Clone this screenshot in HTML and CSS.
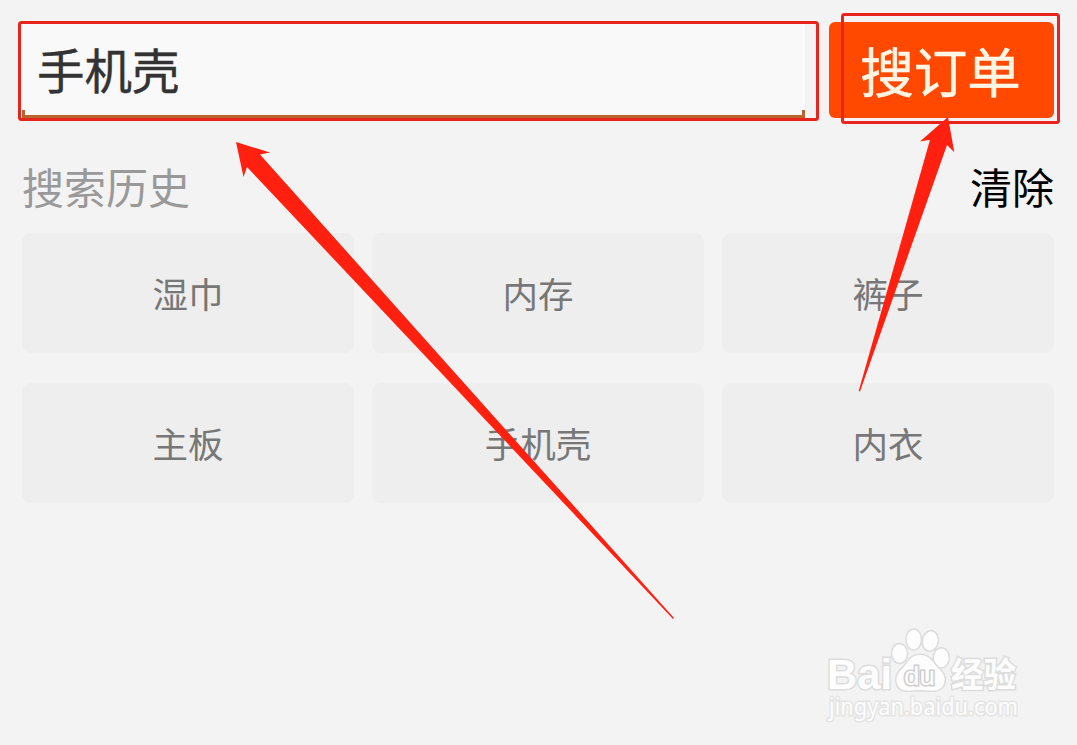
FILE: index.html
```html
<!DOCTYPE html>
<html lang="zh-CN">
<head>
  <meta charset="utf-8" />
  <title>搜索订单</title>
  <link rel="stylesheet" href="styles.css">
</head>
<body>

<div class="search">
  <div class="field">手机壳</div>
  <div class="button">搜订单</div>
</div>

<div class="heading">
  <span class="title">搜索历史</span>
  <span class="clear">清除</span>
</div>

<div class="history">
  <div class="item">湿巾</div>
  <div class="item">内存</div>
  <div class="item">裤子</div>
  <div class="item">主板</div>
  <div class="item">手机壳</div>
  <div class="item">内衣</div>
</div>

<!-- red marks and watermark drawn over the page -->
<svg class="overlay" width="1077" height="745" viewBox="0 0 1077 745">
  <g class="frame">
    <rect x="19.5" y="22.5" width="798" height="97" rx="2" />
    <rect x="842.5" y="14.5" width="216" height="108" rx="2" />
  </g>
  <g class="arrow">
    <path d="M236 142 L270 152.5 L260 154.5 L674 618 L673 619 L247 167 L243.5 177 Z" />
    <path d="M948 117 L954.3 152.3 L947 145 L860 391.5 L858.7 391 L930 139.8 L920 141.5 Z" />
  </g>
  <g class="watermark">
    <text class="bai" x="827" y="689" textLength="65" lengthAdjust="spacingAndGlyphs">Bai</text>
    <ellipse cx="899.5" cy="653.5" rx="7.3" ry="9.3" />
    <ellipse cx="913.7" cy="639.5" rx="7" ry="9.8" />
    <ellipse cx="930.3" cy="641" rx="7.3" ry="9.6" transform="rotate(10 930.3 641)" />
    <ellipse cx="941.3" cy="657.8" rx="7.3" ry="9.3" />
    <path d="M920 655 C930 655 933 663 938 668 C945 674 946 680 943 686 C938 693 928 690 920 690 C912 690 902 693 898 686 C895 680 896 674 903 668 C908 663 910 655 920 655 Z" />
    <text class="du" x="904" y="685" textLength="31" lengthAdjust="spacingAndGlyphs">du</text>
    <text class="jingyan" x="951" y="687" textLength="65" lengthAdjust="spacingAndGlyphs">经验</text>
    <text class="url" x="829" y="715" textLength="189" lengthAdjust="spacingAndGlyphs">jingyan.baidu.com</text>
  </g>
</svg>

</body>
</html>
```

FILE: styles.css
```css
body {
  position: relative;
  box-sizing: border-box;
  height: 745px;
  margin: 0;
  padding: 22px 23px 0 22px;
  overflow: hidden;
  background: #f3f3f3;
  font-family: "Noto Sans CJK SC", sans-serif;
}

.search {
  display: flex;
  justify-content: space-between;
  height: 96px;
}

.field {
  position: relative;
  box-sizing: border-box;
  width: 783px;
  padding-left: 15px;
  border-bottom: solid 3px #b9632f;
  background: #f9f9f9;
  color: #333;
  font-size: 47.5px;
  line-height: 93px;
  -webkit-text-stroke: 0.4px #333;
}

/* turned-up ends of the underline */
.field::before,
.field::after {
  content: "";
  position: absolute;
  bottom: 0;
  left: 0;
  width: 3px;
  height: 5px;
  background: #b9632f;
}
.field::after {
  right: 0;
  left: auto;
}

.button {
  box-sizing: border-box;
  width: 225px;
  padding-right: 2px;
  border-radius: 6px;
  background: #ff4800;
  color: #fff6e6;
  font-size: 53.5px;
  line-height: 95px;
  text-align: center;
  -webkit-text-stroke: 0.6px #fff6e6;
}

.heading {
  display: flex;
  justify-content: space-between;
  height: 115px;
  font-size: 42px;
  line-height: 135px;
}

.title {
  color: #999;
}

.clear {
  color: #000;
}

.history {
  display: grid;
  grid-template-columns: repeat(3, 1fr);
  gap: 30px 18px;
}

.item {
  height: 120px;
  border-radius: 9px;
  background: #eee;
  color: #777;
  font-size: 35.5px;
  line-height: 119px;
  text-align: center;
}

.overlay {
  position: absolute;
  top: 0;
  left: 0;
}

.frame {
  fill: none;
  stroke: #e8251c;
  stroke-width: 3px;
}

.arrow {
  fill: #ff2010;
}

.watermark {
  fill: #fdfdfd;
  stroke: #dcdcdc;
  stroke-width: 3px;
  paint-order: stroke;
}

.bai {
  font: bold 43px "Liberation Sans", sans-serif;
}

.du {
  stroke: #cfcfcf;
  font: 26px "Liberation Sans", sans-serif;
}

.jingyan {
  font: bold 34px "Noto Sans CJK SC", sans-serif;
}

.url {
  stroke: #e4e4e4;
  font: 23px "Noto Sans", sans-serif;
}
```
